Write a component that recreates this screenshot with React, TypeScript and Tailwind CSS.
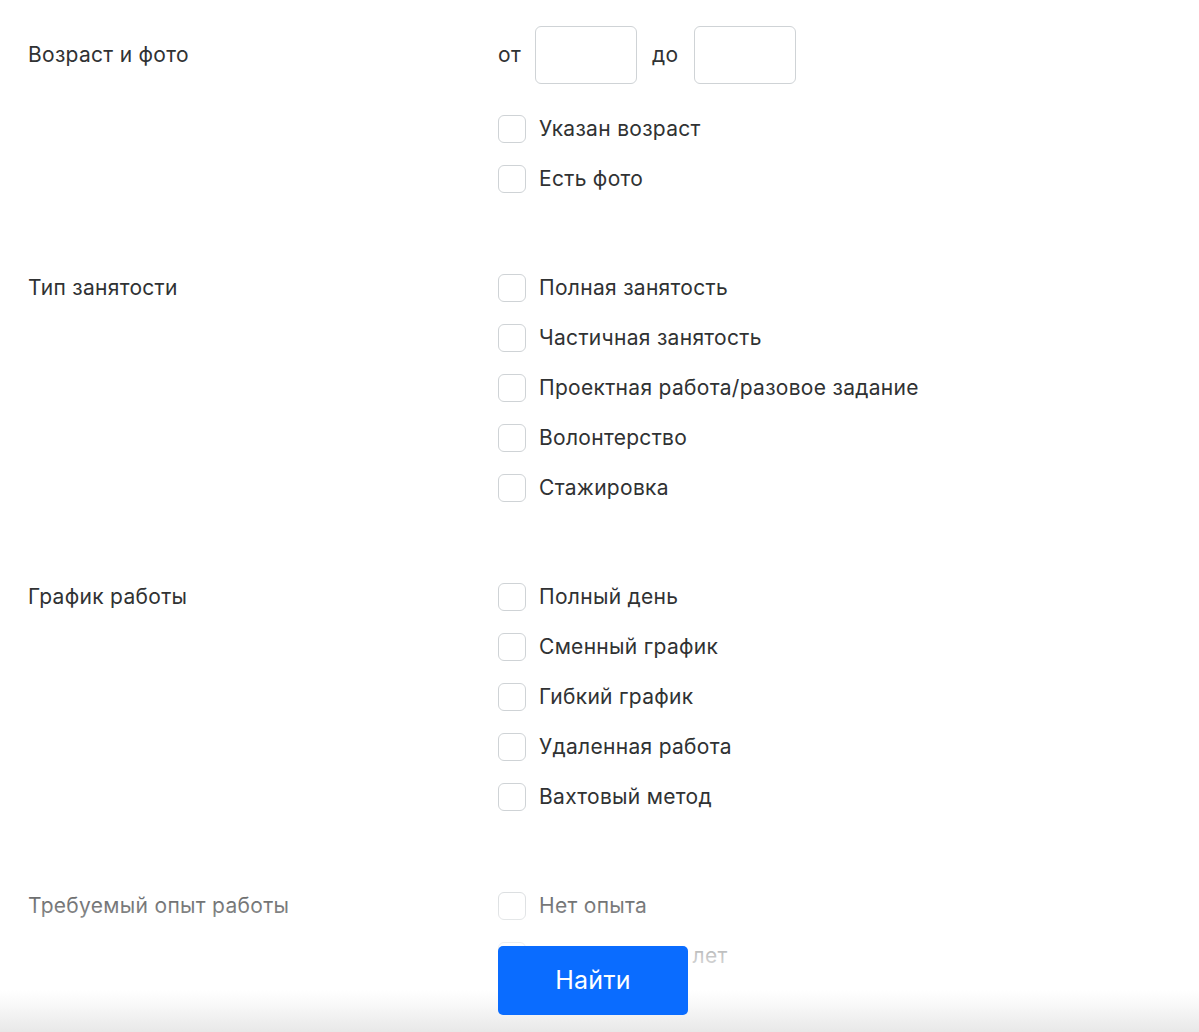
import React from "react";

function Box() {
  return <span className="block w-[28px] h-[28px] shrink-0 rounded-[6px] border-[1.5px] border-[#cfd3d6] bg-white" />;
}

function Option({ text }: { text: string }) {
  return (
    <label className="flex items-center h-[28px] gap-[13px]">
      <Box />
      <span className="text-[21px] leading-[28px] tracking-[0.3px] text-[#303233]">{text}</span>
    </label>
  );
}

function Section({ title, options, first }: { title: string; options: string[]; first?: React.ReactNode }) {
  return (
    <div className="grid grid-cols-[470px_1fr]">
      <div className={"text-[21px] leading-[28px] tracking-[0.3px] text-[#303233] " + (first ? "pt-[15px]" : "")}>{title}</div>
      <div className="flex flex-col gap-[22px]">
        {first}
        {options.map((o) => (
          <Option key={o} text={o} />
        ))}
      </div>
    </div>
  );
}

export default function App() {
  return (
    <div className="relative h-[1032px] w-[1199px] overflow-hidden bg-white" style={{ fontFamily: "Inter, 'Noto Sans', sans-serif" }}>
      <div className="pl-[28px] pt-[26px] flex flex-col gap-[81px]">
        <Section
          title="Возраст и фото"
          first={
            <div className="flex items-center mb-[9px]">
              <span className="text-[21px] tracking-[0.3px] text-[#303233] w-[37px]">от</span>
              <span className="block w-[102px] h-[58px] rounded-[6px] border-[1.5px] border-[#cfd3d6]" />
              <span className="text-[21px] tracking-[0.3px] text-[#303233] ml-[15px] w-[42px]">до</span>
              <span className="block w-[102px] h-[58px] rounded-[6px] border-[1.5px] border-[#cfd3d6]" />
            </div>
          }
          options={["Указан возраст", "Есть фото"]}
        />
        <Section
          title="Тип занятости"
          options={["Полная занятость", "Частичная занятость", "Проектная работа/разовое задание", "Волонтерство", "Стажировка"]}
        />
        <Section
          title="График работы"
          options={["Полный день", "Сменный график", "Гибкий график", "Удаленная работа", "Вахтовый метод"]}
        />
        <Section
          title="Требуемый опыт работы"
          options={["Нет опыта", "От 1 года до 3 лет", "От 3 до 6 лет", "Более 6 лет"]}
        />
      </div>
      <div className="absolute left-0 right-0 bottom-0 h-[190px] bg-[linear-gradient(to_bottom,rgba(255,255,255,0)_0%,rgba(255,255,255,0.35)_34%,rgba(255,255,255,0.72)_60%,#ffffff_78%,#f8f8f8_86%,#e8e8e8_100%)]" />
      <button className="absolute left-[498px] top-[946px] w-[190px] h-[69px] rounded-[5px] bg-[#0a6cff] text-white text-[25px] tracking-[0.3px]">
        Найти
      </button>
    </div>
  );
}
